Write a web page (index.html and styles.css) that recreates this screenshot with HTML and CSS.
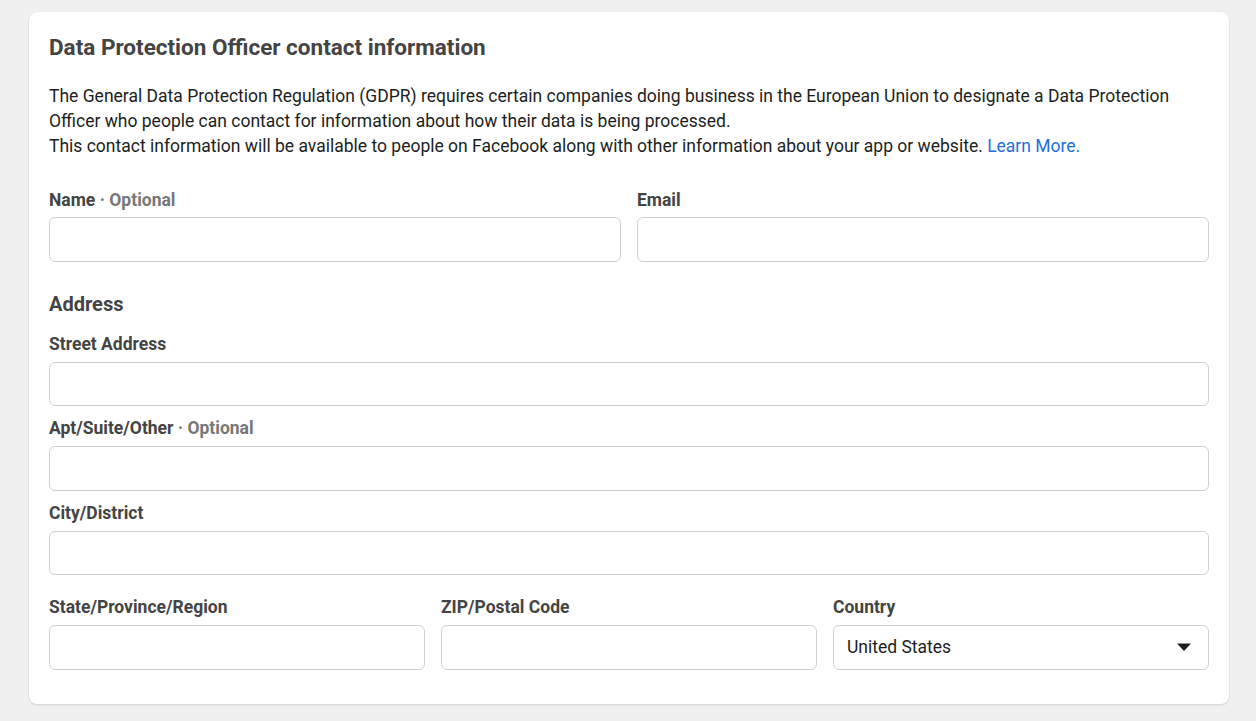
FILE: index.html
```html
<!DOCTYPE html>
<html>
<head>
<meta charset="utf-8">
<link rel="stylesheet" href="styles.css">
</head>
<body>
<div class="card">
  <h2 class="title">Data Protection Officer contact information</h2>
  <p class="desc">The General Data Protection Regulation (GDPR) requires certain companies doing business in the European Union to designate a Data Protection Officer who people can contact for information about how their data is being processed.<br>This contact information will be available to people on Facebook along with other information about your app or website. <a class="link" href="#">Learn More.</a></p>

  <div class="row two">
    <div class="field">
      <div class="label">Name <span class="opt">· Optional</span></div>
      <div class="input"></div>
    </div>
    <div class="field">
      <div class="label">Email</div>
      <div class="input"></div>
    </div>
  </div>

  <h3 class="section">Address</h3>
  <div class="field">
    <div class="label">Street Address</div>
    <div class="input"></div>
  </div>
  <div class="field">
    <div class="label">Apt/Suite/Other <span class="opt">· Optional</span></div>
    <div class="input"></div>
  </div>
  <div class="field">
    <div class="label">City/District</div>
    <div class="input"></div>
  </div>
  <div class="row three">
    <div class="field">
      <div class="label">State/Province/Region</div>
      <div class="input"></div>
    </div>
    <div class="field">
      <div class="label">ZIP/Postal Code</div>
      <div class="input"></div>
    </div>
    <div class="field">
      <div class="label">Country</div>
      <div class="input select">
        <span>United States</span>
        <svg class="caret" width="14" height="8" viewBox="0 0 14 8"><path d="M0 0.5 H14 L7.5 7.5 Q7 8 6.5 7.5 Z" fill="#1c1e21"/></svg>
      </div>
    </div>
  </div>
</div>
</body>
</html>
```

FILE: styles.css
```css
html, body {
  margin: 0;
  padding: 0;
  background: #f0f0f0;
}
body {
  padding: 12px 27px 17px 29px;
  font-family: Roboto, "Liberation Sans", Arial, sans-serif;
  color: #1c1e21;
}
.card {
  background: #fff;
  border-radius: 8px;
  box-shadow: 0 1px 2px rgba(0,0,0,0.12), 0 0 1px rgba(0,0,0,0.08);
  padding: 22px 20px 34px 20px;
}
.title {
  margin: 0;
  font-size: 22.5px;
  line-height: 26px;
  font-weight: 700;
  color: #444;
}
.desc {
  margin: 24px 0 0 0;
  font-size: 17.5px;
  line-height: 25px;
  color: #1c1e21;
}
.link {
  color: #216fdb;
  text-decoration: none;
}
.row {
  display: grid;
  column-gap: 16px;
}
.row.two {
  grid-template-columns: 1fr 1fr;
  margin-top: 31px;
}
.row.three {
  grid-template-columns: 1fr 1fr 1fr;
  margin-top: 22px;
}
.field {
  display: flex;
  flex-direction: column;
  margin-bottom: 12px;
}
.row .field {
  margin-bottom: 0;
}
.label {
  font-size: 17.5px;
  line-height: 21px;
  font-weight: 700;
  color: #444;
  margin-bottom: 7px;
}
.row.two .label {
  margin-bottom: 6px;
}
.opt {
  color: #777;
}
.input {
  height: 42.5px;
  border: 1px solid #ccd0d5;
  border-radius: 6px;
  background: #fff;
}
.select {
  display: flex;
  align-items: center;
  justify-content: space-between;
  padding: 0 17px 0 13px;
  font-size: 17.5px;
  color: #1c1e21;
}
.section {
  margin: 30px 0 18px 0;
  font-size: 20px;
  line-height: 24px;
  font-weight: 700;
  color: #444;
}
```
